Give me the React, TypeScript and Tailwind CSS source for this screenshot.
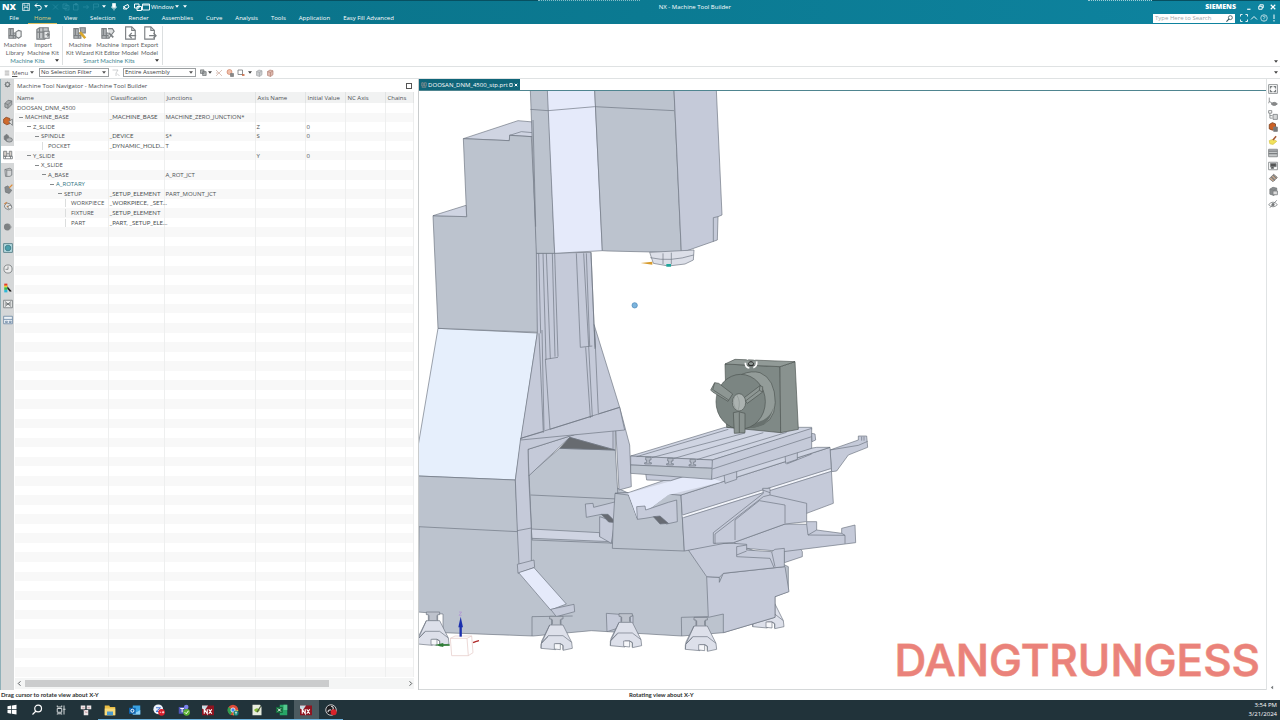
import type { ReactNode } from 'react';

type IconProps = { className?: string; children: ReactNode };

const Icon = ({ className = 'size-3', children }: IconProps) => (
  <svg viewBox="0 0 16 16" className={className} fill="none" stroke="currentColor" strokeWidth="1.3" aria-hidden="true">
    {children}
  </svg>
);

const Caret = ({ className = '' }: { className?: string }) => (
  <svg viewBox="0 0 8 5" className={`h-[3px] w-1 shrink-0 ${className}`} fill="currentColor" aria-hidden="true">
    <path d="M0 0h8L4 5z" />
  </svg>
);

/* ---------- Shared drawings ---------- */

const Gear = () => (
  <>
    <circle cx="8" cy="8" r="4.5" strokeWidth="2.6" />
    <path d="M8 1v3M8 12v3M1 8h3M12 8h3M3 3l2 2M11 11l2 2M13 3l-2 2M5 11l-2 2" strokeWidth="1.6" />
  </>
);

const Cube = ({ fill = '#c9ccce' }: { fill?: string }) => (
  <>
    <path d="M3 5l5-3 6 1.500v8L9 15l-6-2z" fill={fill} />
    <path d="M3 5l6 2 5-3.500M9 7v8" />
  </>
);

const Mill = () => (
  <>
    <path d="M1 14V3h5v5h3v6z" fill="#b9bcbf" />
    <path d="M1 11h8M3 3v8M6 8v6" />
  </>
);

/* ---------- Title bar and ribbon tabs ---------- */

const tabs = ['Home', 'View', 'Selection', 'Render', 'Assemblies', 'Curve', 'Analysis', 'Tools', 'Application', 'Easy Fill Advanced'];

const TitleBar = () => (
  <header className="bg-gradient-to-r from-[#0a7086] via-[#0b7a92] to-[#0e84a0] text-white">
    <div className="flex h-px">
      <div className="w-[42%] bg-[#075061]" />
      <div className="w-[8%] border-b border-dotted border-white/50" />
      <div className="flex-1" />
      <div className="w-[5%] border-b border-dotted border-white/60" />
      <div className="w-[10%] bg-[#075061]" />
    </div>
    <div className="grid h-[11px] grid-cols-[6fr_auto_5fr] items-center text-[6px] leading-[8px]">
      <div className="flex items-center pl-[2px]">
        <span className="w-5 font-['Open_Sans',sans-serif] text-[9px] font-extrabold leading-[10px]">NX</span>
        <button aria-label="Save">
          <Icon className="size-2"><path d="M1 1h14v14H1zM4 1v5h8V1M4 15V9h8v6" /></Icon>
        </button>
        <button aria-label="Undo" className="ml-1 flex items-center gap-[2px]">
          <Icon className="size-2"><path d="M6 1L2 5l4 4M2 5h8a4 4 0 010 9H8" strokeWidth="2" /></Icon>
          <Caret />
        </button>
        <div className="ml-1 flex gap-[2px] text-[#2f8ea4]">
          <Icon className="size-2"><path d="M2 3l10 10M12 3L2 13" /></Icon>
          <Icon className="size-2"><path d="M2 2h8v9H2zM6 5h8v9H6z" /></Icon>
          <Icon className="size-2"><path d="M3 3h9v11H3zM6 1h4v3H6z" /></Icon>
          <Icon className="size-2"><path d="M2 8h11M9 4l4 4-4 4" /></Icon>
          <Icon className="size-2"><path d="M3 14V2h10v6H3" /></Icon>
        </div>
        <Caret className="ml-[2px]" />
        <button aria-label="Voice command" className="ml-1">
          <Icon className="size-2"><path d="M5 1h6v8H5z" fill="currentColor" /><path d="M3 7c0 6 10 6 10 0M8 12v3" /></Icon>
        </button>
        <button aria-label="Touch mode" className="ml-1">
          <Icon className="size-2"><path d="M3 12l2-6 7-3 2 5-5 4zM2 7l8 5" strokeWidth="2" /></Icon>
        </button>
        <button aria-label="Switch window" className="ml-1">
          <Icon className="size-2"><path d="M1 2h9v8H1zM6 7h9v8H6z" strokeWidth="2" /></Icon>
        </button>
        <button className="flex items-center gap-px">
          <Icon className="size-2"><path d="M1 2h14v12H1zM1 4h14" strokeWidth="1.800" /></Icon>
          Window
          <Caret />
        </button>
        <Caret className="ml-1" />
      </div>
      <h1>NX - Machine Tool Builder</h1>
      <div className="flex items-center justify-end gap-[6px] pr-1">
        <span className="mr-1 font-['Open_Sans',sans-serif] text-[7px] font-extrabold">SIEMENS</span>
        <button aria-label="Minimize"><Icon className="size-[6px]"><path d="M3 14h9" strokeWidth="3" /></Icon></button>
        <button aria-label="Restore"><Icon className="size-[6px]"><path d="M2 6h9v8H2zM5 6V2h9v8h-3" strokeWidth="2.500" /></Icon></button>
        <button aria-label="Close"><Icon className="size-[6px]"><path d="M2 2l12 12M14 2L2 14" strokeWidth="3" /></Icon></button>
      </div>
    </div>
    <div className="flex h-3 items-center justify-between">
      <div className="flex h-full text-[6px] leading-[12px]">
        <button className="w-7">File</button>
        <nav className="flex gap-px">
          {tabs.map((tab) => (
            <button
              key={tab}
              className={`px-[6px] ${tab === 'Home' ? 'text-[#e0cd7c] shadow-[inset_0_-1px_0_#d9bd5f]' : ''}`}
            >
              {tab}
            </button>
          ))}
        </nav>
      </div>
      <div className="flex items-center gap-[2px] pr-[2px]">
        <label className="mr-[3px] flex h-[9px] w-[82px] items-center bg-white px-[2px] text-[#33525b]">
          <input aria-label="Search" placeholder="Type Here to Search" className="w-full min-w-0 text-[6px] leading-[8px] outline-none placeholder:text-[#a2a8ab]" />
          <Icon className="size-[7px] shrink-0"><circle cx="10" cy="6" r="4.500" strokeWidth="1.800" /><path d="M7 9l-6 6" strokeWidth="2.500" /></Icon>
        </label>
        <button aria-label="Full screen"><Icon className="size-2"><path d="M1 5V1h4M11 1h4v4M15 11v4h-4M5 15H1v-4" strokeWidth="1.800" /></Icon></button>
        <button aria-label="Collapse ribbon"><Icon className="size-2"><path d="M2 11l6-6 6 6" strokeWidth="1.800" /></Icon></button>
        <button aria-label="Help"><Icon className="size-2"><circle cx="8" cy="8" r="6.500" /><path d="M6 6c0-3 5-2 4 .5L8 8.500v1.500M8 11.500v1.500" /></Icon></button>
        <button aria-label="Alerts"><Icon className="size-2"><path d="M8 1v9M8 12v3" strokeWidth="2" /></Icon></button>
      </div>
    </div>
  </header>
);

/* ---------- Ribbon ---------- */

type Tool = { lines: [string, string]; width: string; art: ReactNode };

const kitTools: Tool[] = [
  { lines: ['Machine', 'Library'], width: 'w-[26px]', art: <><Mill /><path d="M9 7l3-2 3 1v6l-3 2-3-2z" fill="#eef0f1" /></> },
  { lines: ['Import', 'Machine Kit'], width: 'w-[30px]', art: <><path d="M1 4l3-2h10v9l-4 4H1z" fill="#c3c6c8" /><path d="M1 7h12M4 2v12M8 2v12" /><path d="M9 6h6v8H9z" fill="#e6e8e9" /><path d="M11 10h4M13 8l2 2-2 2" /></> },
];

const smartTools: Tool[] = [
  { lines: ['Machine', 'Kit Wizard'], width: 'w-[30px]', art: <><Mill /><path d="M8 2h6v6H9z" fill="#a8aaac" /><path d="M8 7l6 7" stroke="#d9a72b" strokeWidth="3" /></> },
  { lines: ['Machine', 'Kit Editor'], width: 'w-[25px]', art: <><Mill /><path d="M8 3h5l2 3-6 8" fill="#dddfe0" /><path d="M9 8l5 5" strokeWidth="2" /></> },
  { lines: ['Import', 'Model'], width: 'w-[20px]', art: <><path d="M3 1h7l4 4v10H3z" fill="#fff" /><path d="M10 1v4h4M15 11H8M10 8l-3 3 3 3" /></> },
  { lines: ['Export', 'Model'], width: 'w-[19px]', art: <><path d="M2 1h7l4 4v10H2z" fill="#fff" /><path d="M9 1v4h4M7 11h7M12 8l3 3-3 3" /></> },
];

const RibbonGroup = ({ title, tools, className }: { title: string; tools: Tool[]; className: string }) => (
  <section className={`flex flex-col border-r border-[#dcdfe0] ${className}`}>
    <div className="flex flex-1">
      {tools.map((tool) => (
        <button key={tool.lines.join(' ')} className={`flex flex-col items-center text-[#5e6264] ${tool.width}`}>
          <Icon className="mb-px size-[14px] text-[#7b7f82]">{tool.art}</Icon>
          <span className="whitespace-nowrap">{tool.lines[0]}</span>
          <span className="whitespace-nowrap">{tool.lines[1]}</span>
        </button>
      ))}
    </div>
    <div className="relative pr-[9px] text-center text-[#3b8590]">
      {title}
      <Caret className="absolute right-[3px] top-[2px] text-[#333]" />
    </div>
  </section>
);

const Ribbon = () => (
  <div className="flex h-[43px] justify-between border-b border-[#dfe2e3] bg-white pb-px pt-[2px] font-['Lato','Open_Sans',sans-serif] text-[6px] leading-[8px]">
    <div className="flex">
      <RibbonGroup title="Machine Kits" tools={kitTools} className="w-[63px] pl-[2px]" />
      <RibbonGroup title="Smart Machine Kits" tools={smartTools} className="w-[100px] pl-[2px]" />
    </div>
    <Caret className="mb-[2px] mr-[2px] self-end text-[#444]" />
  </div>
);

const selectClass = 'h-[9px] appearance-none border border-[#9b9fa1] bg-white pl-px text-[6px] leading-[7px] text-[#3d4142] outline-none';

const SelectionBar = () => (
  <div className="flex h-3 items-center border-b border-[#dfe2e3] bg-white pl-1 pr-[2px] text-[6px] leading-[8px] text-[#555]">
    <button className="flex w-[35px] items-center gap-[2px]">
      <Icon className="size-[6px]"><path d="M2 3h12M2 8h12M2 13h12" /></Icon>
      <span><u>M</u>enu</span>
      <Caret />
    </button>
    <span className="relative flex items-center">
      <select aria-label="Selection filter" className={`w-[70px] ${selectClass}`}><option>No Selection Filter</option></select>
      <Caret className="pointer-events-none absolute right-[3px]" />
    </span>
    <Icon className="mx-[3px] size-2 text-[#b5b8ba]"><path d="M1 2h11L8 8v6M10 9l5 5" /></Icon>
    <span className="relative flex items-center">
      <select aria-label="Selection scope" className={`w-[73px] ${selectClass}`}><option>Entire Assembly</option></select>
      <Caret className="pointer-events-none absolute right-[3px]" />
    </span>
    <div className="ml-1 flex items-center gap-[3px] text-[#737779]">
      <Icon className="size-[7px]"><path d="M1 2h8v8H1zM6 6h8v9H6z" fill="#b5b9b9" strokeWidth="1.800" /></Icon>
      <Caret className="-ml-[2px] text-[#444]" />
      <Icon className="size-2 text-[#c9a598]"><path d="M2 2l12 12M14 2L2 14M2 8h4" /></Icon>
      <Icon className="size-2"><circle cx="7" cy="6" r="5" fill="#f0bda8" stroke="#cb7f62" /><path d="M9 9h6v6H9z" fill="#888" /></Icon>
      <Icon className="size-2"><path d="M2 2h9v9H2z" strokeWidth="1.600" /><path d="M10 12h5" stroke="#c55a30" strokeWidth="3" /></Icon>
      <Caret className="text-[#444]" />
      <Icon className="size-2 text-[#a3a6a8]"><Cube /></Icon>
      <Icon className="size-2 text-[#b08074]"><Cube fill="#dfbab0" /></Icon>
    </div>
    <Caret className="ml-auto text-[#444]" />
  </div>
);

/* ---------- Resource bar on the left ---------- */

const railTop: { label: string; art: ReactNode }[] = [
  { label: 'Assembly Navigator', art: <><path d="M3 7l5-5 6 1v6l-6 6-5-2z" fill="#a9adaf" /><path d="M3 7l5 2 6-6M8 9v6" /></> },
  { label: 'Constraint Navigator', art: <><path d="M1 5l4-3 6 2v8l-5 2-5-3z" fill="#cf6a2c" stroke="#8a4a26" /><path d="M9 9l6-4v10z" fill="#ddd" /></> },
  { label: 'Part Navigator', art: <><path d="M2 5l4-3 3 3v6l-3 2-4-3z" fill="#777b7d" /><ellipse cx="10" cy="11" rx="5" ry="3.500" fill="#b3b6b8" /></> },
  { label: 'Machine Tool Navigator', art: <><path d="M1 2h5v8H1zM10 2h4v8h-4z" fill="#d5cfc8" /><path d="M1 10h14v4H1zM6 6h4M4 10v4M12 10v4" /></> },
  { label: 'Reuse Library', art: <><path d="M3 4l8-2 3 2v9l-3 2H4z" fill="#d4d6d7" /><path d="M3 4l3 1h8M6 5v10" /></> },
  { label: 'HD3D Tools', art: <><path d="M3 5l5-2 2 4 4 3-4 5-6-2z" fill="#85898b" /><path d="M10 6l5-5" stroke="#dd8d3b" strokeWidth="2" /></> },
  { label: 'Web Browser', art: <><path d="M2 8l4-5 6 2 2 5-5 4-5-2z" fill="#dedfdf" /><path d="M2 5l4-3M6 8l6 4" stroke="#cf8442" strokeWidth="1.800" /><circle cx="11" cy="10" r="3" fill="#eee" /></> },
];

const railMiddle: { label: string; art: ReactNode }[] = [
  { label: 'Materials', art: <><circle cx="7" cy="8" r="5.500" fill="#7d8183" stroke="none" /><path d="M10 4l4 4-4 5" stroke="#b0b3b5" /></> },
  { label: 'Internet', art: <><path d="M1 1h14v14H1z" fill="#b9dde3" stroke="#49747d" /><circle cx="8" cy="8" r="4.500" fill="#4a9fac" stroke="#3b7984" /></> },
  { label: 'History', art: <><circle cx="8" cy="8" r="6.500" fill="#ececec" /><path d="M8 4v4.500H4" /></> },
];

const railBottom: { label: string; art: ReactNode }[] = [
  {
    label: 'Visualization',
    art: (
      <g stroke="none">
        <path d="M2 1h5v4H2z" fill="#e23a2b" /><path d="M2 4h5v3H2z" fill="#f4d12c" /><path d="M2 7h5v4H2z" fill="#36c04a" />
        <path d="M2 11h5v4H2z" fill="#2fb8d8" /><path d="M7 5l7 8-3 1-4-5z" fill="#222" />
      </g>
    ),
  },
  { label: 'Process Studio', art: <><path d="M1 2h14v12H1z" fill="#eceded" /><path d="M3 4l10 8M13 4L3 12M3 8h10" strokeWidth="1.600" /></> },
  { label: 'Layers', art: <><path d="M1 2h14v12H1z" fill="#eef3f8" stroke="#6b86a3" /><path d="M1 7h14M4 10h3v2H4zM10 10h3v2h-3z" stroke="#6b86a3" /></> },
];

const ResourceBar = () => (
  <aside className="flex w-[14px] shrink-0 flex-col items-center border-l border-[#8fb0b8] bg-[#d5d7d8] text-[#74797b]">
    <button aria-label="Settings" className="flex h-4 items-start pt-[2px]"><Icon className="size-[7px]"><Gear /></Icon></button>
    {railTop.map((item) => (
      <button
        key={item.label}
        aria-label={item.label}
        className={`flex h-[17px] w-full items-center justify-center ${item.label === 'Machine Tool Navigator' ? 'bg-white' : ''}`}
      >
        <Icon className="size-[10px]">{item.art}</Icon>
      </button>
    ))}
    <div className="mb-px mt-[2px] flex w-full flex-col">
      {railMiddle.map((item) => (
        <button key={item.label} aria-label={item.label} className="flex h-[21px] items-center justify-center">
          <Icon className="size-[10px]">{item.art}</Icon>
        </button>
      ))}
    </div>
    {railBottom.map((item) => (
      <button key={item.label} aria-label={item.label} className="flex h-4 items-center justify-center">
        <Icon className="size-[10px]">{item.art}</Icon>
      </button>
    ))}
  </aside>
);

/* ---------- Machine Tool Navigator ---------- */

type Row = {
  name: string;
  depth: number;
  leaf?: boolean;
  active?: boolean;
  classification?: string;
  junctions?: string;
  axis?: string;
  value?: string;
};

const rows: Row[] = [
  { name: 'DOOSAN_DNM_4500', depth: 0, leaf: true },
  { name: 'MACHINE_BASE', depth: 1, classification: '_MACHINE_BASE', junctions: 'MACHINE_ZERO_JUNCTION*' },
  { name: 'Z_SLIDE', depth: 2, axis: 'Z', value: '0' },
  { name: 'SPINDLE', depth: 3, classification: '_DEVICE', junctions: 'S*', axis: 'S', value: '0' },
  { name: 'POCKET', depth: 4, leaf: true, classification: '_DYNAMIC_HOLD...', junctions: 'T' },
  { name: 'Y_SLIDE', depth: 2, axis: 'Y', value: '0' },
  { name: 'X_SLIDE', depth: 3 },
  { name: 'A_BASE', depth: 4, junctions: 'A_ROT_JCT' },
  { name: 'A_ROTARY', depth: 5, active: true },
  { name: 'SETUP', depth: 6, classification: '_SETUP_ELEMENT', junctions: 'PART_MOUNT_JCT' },
  { name: 'WORKPIECE', depth: 7, leaf: true, classification: '_WORKPIECE, _SET...' },
  { name: 'FIXTURE', depth: 7, leaf: true, classification: '_SETUP_ELEMENT' },
  { name: 'PART', depth: 7, leaf: true, classification: '_PART, _SETUP_ELE...' },
];

const emptyRows = Array.from({ length: 47 }, (_, i) => i);
const indents = ['pl-px', 'pl-[2px]', 'pl-[10px]', 'pl-[18px]', 'pl-[25px]', 'pl-[33px]', 'pl-[41px]', 'pl-[48px]'];
const columns = ['Name', 'Classification', 'Junctions', 'Axis Name', 'Initial Value', 'NC Axis', 'Chains'];
const cell = 'whitespace-nowrap border-r border-[#eeefef] p-0 pl-px';

const Navigator = () => (
  <section className="flex w-[405px] shrink-0 flex-col border-r border-[#c9cccd] bg-white pl-px pr-1 text-[6px] leading-[8px] text-[#4c5052]">
    <div className="flex h-[13px] items-center justify-between pl-[2px] pr-[2px]">
      <h2 className="text-[#4a4e50]">Machine Tool Navigator - Machine Tool Builder</h2>
      <button aria-label="Maximize panel" className="size-[6px] border border-[#555]" />
    </div>
    <div className="min-h-0 flex-1">
      <table className="h-full w-full table-fixed border-collapse text-left">
        <colgroup>
          <col className="w-[93px]" />
          <col className="w-[56px]" />
          <col className="w-[91px]" />
          <col className="w-[50px]" />
          <col className="w-[40px]" />
          <col className="w-[40px]" />
          <col />
        </colgroup>
        <thead className="bg-[#f1f2f2]">
          <tr className="h-[11px]">
            {columns.map((column) => (
              <th key={column} className="whitespace-nowrap border-r border-[#e2e4e4] p-0 pl-[2px] font-normal">{column}</th>
            ))}
          </tr>
        </thead>
        <tbody>
          {rows.map((row) => (
            <tr key={row.name} className="h-2 even:bg-[#f8f8f8]">
              <td className={`${cell} ${row.active ? 'text-[#2f7684]' : ''}`}>
                <span className={`flex items-center ${indents[row.depth]}`}>
                  {row.depth > 0 && (
                    <span className="ml-px flex w-[6px] shrink-0">
                      {row.leaf ? <span className="h-2 w-1 border-l border-[#dcdede]" /> : <span className="h-px w-1 bg-[#85898b]" />}
                    </span>
                  )}
                  {row.name}
                </span>
              </td>
              <td className={`${cell} font-['Lato','Open_Sans',sans-serif]`}>{row.classification}</td>
              <td className={cell}>{row.junctions}</td>
              <td className={cell}>{row.axis}</td>
              <td className={cell}>{row.value}</td>
              <td className={cell} />
              <td className={cell} />
            </tr>
          ))}
          {emptyRows.map((i) => (
            <tr key={i} className="h-2 odd:bg-white even:bg-[#f8f8f8]">
              {columns.map((column) => <td key={column} className={cell} />)}
            </tr>
          ))}
        </tbody>
      </table>
    </div>
    <div className="my-px flex h-[11px] items-center gap-[3px] bg-[#f4f5f5] pl-[2px] pr-px">
      <Icon className="size-[5px]"><path d="M11 1L4 8l7 7" strokeWidth="3" /></Icon>
      <div className="h-[7px] flex-1"><div className="h-full w-4/5 bg-[#cbcccd]" /></div>
      <Icon className="size-[5px]"><path d="M5 1l7 7-7 7" strokeWidth="3" /></Icon>
    </div>
  </section>
);

/* ---------- 3D model, drawn at three units per screen pixel ---------- */

const front = '#bcc3ce';
const side = '#c5cad9';
const top = '#cfd4e2';
const light = '#e5eafa';

const Poly = ({ p, f }: { p: string; f: string }) => <polygon points={p} fill={f} />;

const Foot = ({ x, y }: { x: number; y: number }) => (
  <g transform={`translate(${x} ${y})`}>
    <path d="M-20-98h40v8h-6v20h-28v-20h-6z" fill="#bdc2cc" />
    <path d="M-20-72h40l26 52 2 18-28 6v-16l-8-4h-14v18l-44-4 2-22z" fill="#dde0ea" />
    <path d="M-20-72l-24 54 20-22h44l26 20M-46-2v-14l22-22M20 2v-12l-8-6M-12-88v14M12-88v14" fill="none" />
    <path d="M-6 0v-16h18v18z" fill="#f6f7fa" />
  </g>
);

const Column = () => (
  <g>
    <Poly p="136,146 300,92 345,96 345,140 275,136 274,152" f={top} />
    <Poly p="275,136 310,125 345,128 345,140" f={top} />
    <Poly p="136,146 274,152 275,136 340,140 357,490 360,727 60,715 45,377 146,380" f={front} />
    <Poly p="45,377 144,346 146,380" f={top} />
    <Poly p="355,490 519,487 528,703 605,952 620,1020 308,1050 358,729" f={side} />
    <path d="M362 490l6 240M375 490l9 320M385 490l12 316M403 490l8 310M410 490l10 310M382 808l38-6M475 490l12 282M497 490l15 278M505 490l10 278M519 487l12 290M487 772l36-4M363 730l13 298M372 720l6 300M382 808l14 210M512 768l11 212M503 772l14 212M530 720l11 250M396 1018l127-40M541 972l64-20M528 703l4 70M308 1045l68-20" fill="none" />
    <Poly p="337,0 390,0 410,490 355,490" f={front} />
    <Poly p="388,0 530,0 553,482 410,490" f={light} />
    <Poly p="530,0 768,0 790,488 570,483 553,482" f={front} />
    <Poly p="768,0 895,0 912,375 900,380 898,450 790,488" f={side} />
    <path d="M337 58l53 4 140-12 238 12M886 455v-72l14-3M345 90l8 320" fill="none" />
    <path d="M695 487l133-7-2 30-25 12-50 6-45-8z" fill="#dcdfe8" />
    <path d="M697 503q60 14 130-8M760 488v35M735 490v32" fill="none" />
    <path d="M668 519l35-4v9z" fill="#d79b2c" stroke="none" />
    <rect x="745" y="522" width="14" height="8" fill="#1fa79c" stroke="none" />
  </g>
);

const Base = () => (
  <g>
    <Poly p="5,1158 292,1170 335,1155 600,1195 1111,1430 1111,1505 1071,1520 1071,1582 916,1628 791,1638 690,1632 520,1622 345,1638 75,1628 75,1572 0,1566" f={front} />
    <g transform="translate(0 720)">
      <Poly p="60,-5 358,9 310,325 292,450 0,438 0,350" f="#e6effc" />
      <Poly p="0,438 292,450 300,605 0,590" f={front} />
      <path d="M342 918v-58l122-2" fill="none" />
      <Poly p="333,435 425,355 592,360 600,500 600,640 342,630" f={front} />
      <Poly p="330,358 592,275 592,360 455,322 333,437" f={side} />
      <Poly p="425,355 455,322 590,360" f="#676b70" />
      <path d="M338 495l262 12" fill="none" />
      <Poly p="340,597 545,608 545,620 580,622 580,635 342,625" f={top} />
      <Poly p="308,325 605,232 635,345 640,470 603,480 592,275 330,358 332,435 340,597 340,700 303,703 298,600 292,450" f={side} />
      <path d="M585 278v80M298 602l42-8" fill="none" />
      <Poly p="298,703 348,690 350,712 300,730" f={side} />
      <Poly p="302,728 348,713 445,822 398,840" f={light} />
      <Poly p="398,838 468,823 470,845 415,860" f={side} />
      <Poly p="545,560 590,575 580,640 545,620" f={side} />
      <Poly p="502,522 525,520 527,532 622,508 626,568 590,578 550,553 505,562" f={side} />
      <Poly p="550,553 570,553 595,578 572,576" f="#676b73" />
      <Poly p="565,850 645,856 645,880 567,905" f={side} />
    </g>
  </g>
);

const Table = () => (
  <g transform="translate(546 750)">
    <Poly p="550,550 607,635 607,650 553,668" f={side} />
    <Poly p="400,608 555,552 620,553 620,545 650,545 650,570 725,580 725,565 765,555 767,608 550,635 440,625" f={side} />
    <path d="M620 553l4 32 26-15M725 580l10 6v25M624 585l111 1" fill="none" />
    <Poly p="320,710 358,712 358,727 370,700 555,680 567,755 525,770 525,832 370,878 370,822 325,832" f={side} />
    <Poly p="265,630 345,610 400,610 440,613 440,630 515,635 525,628 553,625 553,680 370,700 358,712 320,710" f={side} />
    <path d="M410 620v30l100 5 12 28M410 620l30-5M410 645l30-12M515 635l10 45" fill="none" />
    <Poly p="690,330 775,300 775,288 800,288 803,322 745,345 710,393 695,395" f={side} />
    <path d="M690 330l85-14 28-12M785 290v12M792 290v12" fill="none" />
    <Poly p="45,460 85,458 112,535 205,462 243,465 253,633 37,625 40,540" f={front} />
    <Poly p="243,465 690,322 700,490 620,520 555,550 400,605 253,633" f={side} />
    <Poly p="45,460 85,458 210,415 360,370 650,322 690,322 243,465 205,463 112,535 85,465" f={top} />
    <path d="M85 460l210-60 70 25-160 40-93 70z" fill={light} stroke="none" />
    <path d="M248 529l444-139" stroke="#f3f5fb" strokeWidth="7" />
    <path d="M248 525l444-139M250 533l444-139" fill="none" />
    <Poly p="340,610 340,578 490,460 488,445 510,445 510,465 620,490 620,545 555,552 400,608" f={side} />
    <path d="M345 612v-30l145-112 20-5M405 600v-60l73-58 77 13v55M488 450l22 8" fill="none" />
    <Poly p="137,400 210,398 248,395 248,410 212,422 140,420" f={side} />
    <Poly p="372,402 410,390 410,418 375,430" f={side} />
    <Poly p="555,345 592,335 592,358 557,370" f={side} />
    <Poly p="92,348 375,262 635,262 635,268 337,360" f={top} />
    <Poly p="92,348 337,360 340,385 92,375" f={side} />
    <Poly p="92,375 340,385 335,418 92,400" f={front} />
    <Poly p="337,360 635,265 635,325 335,418" f={side} />
    <path d="M337 387l298-97M110 350l275-82M155 353l280-74M220 356l270-78M290 359l270-82M560 372l75-30" fill="none" />
    <path d="M137 352h16v8h-5v8h6v4h-20v-4h6v-8h-3zM203 355h16v8h-5v8h6v4h-20v-4h6v-8h-3zM270 358h16v8h-5v8h6v4h-20v-4h6v-8h-3z" fill="#b4bac6" />
    <Poly p="635,280 645,282 647,300 636,305" f={side} />
    <Poly p="110,500 135,498 137,510 205,487 230,480 232,545 200,552 165,530 135,535 112,538" f={side} />
    <Poly p="160,530 180,528 205,550 180,552" f="#676b73" />
    <g stroke="#4d5452">
      <Poly p="375,72 540,80 542,278 380,262" f="#7f8986" />
      <Poly p="540,80 585,65 595,268 542,278" f="#89928f" />
      <Poly p="375,72 405,58 585,65 540,80" f="#919a97" />
      <path d="M425 103q30-12 55-5 45 18 46 90-3 65-60 72l-45 6z" fill="#939c99" />
      <path d="M490 240q36-20 35-75-3 90-62 98l-40 3z" fill="#68716e" stroke="none" />
      <ellipse cx="422" cy="185" rx="74" ry="82" fill="#7b8582" />
      <path d="M430 175l50-38 8 3v16l-46 34z" fill="#8d9693" />
      <path d="M480 137l-2 14-44 34M478 151l10 5" fill="none" />
      <path d="M332 150l12-22 12 2 42 32-14 22-46-28z" fill="#8d9693" />
      <path d="M344 128l-6 22M340 150l46 30" fill="none" />
      <path d="M400 218l15-3 20 5v58l-32 2z" fill="#8a9390" />
      <path d="M418 217v62" />
      <ellipse cx="417" cy="187" rx="20" ry="26" fill="#abb2b0" />
      <path d="M404 170q-10 22 8 42M410 165q14 20 4 46" fill="none" stroke="#8d9693" />
    </g>
    <g fill="none" stroke="#fff" strokeWidth="5">
      <path d="M440 58q12-10 26 0M436 68q0 14 12 16M470 64q2 14-10 19" />
    </g>
    <path d="M445 70q8-10 16 0l-3 7h-10z" fill="none" stroke="#222" strokeWidth="3" />
  </g>
);

const Triad = () => (
  <g transform="translate(0 720)" strokeWidth="2">
    <path d="M97 925l14-7h50l4 50-14 9h-50zM97 925h50l4 52M147 925l14-7" fill="#fff" fillOpacity="0.800" stroke="#e2c6c2" />
    <path d="M128 920v-32" stroke="#1a2fae" strokeWidth="7" />
    <path d="M121 892l7-32 7 32z" fill="#1a2fae" stroke="none" />
    <path d="M95 945H72" stroke="#2d7c35" strokeWidth="5" />
    <path d="M76 939l-26 6 26 6z" fill="#2d7c35" stroke="none" />
    <path d="M165 938l10-4 8-2" stroke="#b32b2b" strokeWidth="4" />
    <path d="M123 846h8l-8 10h8" fill="none" stroke="#b08fd4" />
  </g>
);

const MachineModel = () => (
  <svg viewBox="3 3 2541 1794" preserveAspectRatio="xMinYMin meet" className="h-full w-full" stroke="#6d7480" strokeWidth="2" strokeLinejoin="round" role="img" aria-label="Milling machine model">
    <Foot x={1050} y={1612} />
    <Base />
    <Column />
    <path d="M308 1045L605 952" />
    <Table />
    <Foot x={45} y={1664} />
    <Foot x={415} y={1677} />
    <Foot x={623} y={1669} />
    <Foot x={848} y={1680} />
    <path d="M791 1638l-1-56 80-2" fill="none" />
    <circle cx="650" cy="646" r="8" fill="#7db4dc" stroke="#4284b8" />
    <Triad />
  </svg>
);

/* ---------- Graphics window ---------- */

const viewTools: { label: string; art: ReactNode }[] = [
  { label: 'Fit', art: <><path d="M1 1h14v14H1z" /><path d="M4 7V4h3M9 4h3v3M12 9v3H9M7 12H4V9" strokeWidth="2" /></> },
  { label: 'Orient view', art: <><path d="M2 1v6l5 3M2 7l-1 3" /><path d="M5 11q5-5 10 0-5 5-10 0z" fill="#888" /></> },
  { label: 'Tree view', art: <><path d="M1 1h5v4H1zM3 5v8h4M3 9h4" /><path d="M8 7h7v8H8z" fill="#d5d7d8" /></> },
  { label: 'Rendering style', art: <><path d="M2 4l5-3 5 2v7l-5 3-5-2z" fill="#cc6024" stroke="#7c401d" /><path d="M9 8h6v7H9z" fill="#777" /></> },
  { label: 'Highlight', art: <><path d="M2 9l6-2 6 3-6 5-5-1z" fill="#f2e25b" stroke="#d9c94f" /><path d="M8 8l5-6" stroke="#a75b35" strokeWidth="2.500" /></> },
  { label: 'Background', art: <><path d="M1 2h14v12H1z" fill="#c4c7c8" /><path d="M1 5h14M1 9h14" strokeWidth="2" /></> },
  { label: 'Window layout', art: <><path d="M1 2h14v12H1z" /><path d="M4 4h9v5H4zM5 9h4v3H5z" fill="#555" /></> },
  { label: 'Measure', art: <><path d="M2 9l7-7 6 5-7 7z" fill="#c8a88d" /><path d="M5 6l6 6M8 3l6 6" strokeWidth="1.800" /></> },
  { label: 'Section view', art: <><Cube fill="#8b8f91" /><path d="M8 8h7v6H8z" fill="#ddd" /></> },
  { label: 'Show and hide', art: <><path d="M1 9q7-8 14 0-7 7-14 0zM14 2L3 14" /><circle cx="8" cy="9" r="2" fill="#777" /></> },
];

const GraphicsWindow = () => (
  <main className="relative flex min-w-0 flex-1 flex-col bg-white">
    <div className="flex h-3 border-b border-[#4f8590]">
      <div className="flex w-[101px] items-center justify-between bg-[#0f6579] px-[2px] text-[6px] leading-[8px] text-white">
        <Icon className="size-[6px] shrink-0 text-[#d6a79d]"><path d="M2 2h4v9H2zM9 2h5v9H9zM2 14h12" /></Icon>
        <span>DOOSAN_DNM_4500_stp.prt</span>
        <Icon className="size-[4px] shrink-0"><path d="M3 2h10v12H3z" strokeWidth="3" /></Icon>
        <button aria-label="Close tab"><Icon className="size-[4px]"><path d="M3 3l10 10M13 3L3 13" strokeWidth="4" /></Icon></button>
      </div>
    </div>
    <div className="min-h-0 flex-1 overflow-hidden border-b border-[#d5d8d9]">
      <MachineModel />
    </div>
    <p className="absolute bottom-2 right-[6px] font-['Inter',sans-serif] text-[44px] font-medium leading-[44px] text-[#ea827b] [-webkit-text-stroke:1px_#f2ab90] [paint-order:stroke]">
      DANGTRUNGESS
    </p>
  </main>
);

const ViewToolbar = () => (
  <aside className="flex w-[14px] shrink-0 flex-col items-start justify-between border-l border-[#e0e3e4] pb-px pl-px pt-1 text-[#7b7f81]">
    <div className="flex h-[127px] flex-col justify-between">
      {viewTools.map((tool) => (
        <button key={tool.label} aria-label={tool.label} className="flex flex-1 items-center">
          <Icon className="size-[10px]">{tool.art}</Icon>
        </button>
      ))}
    </div>
    <Caret className="ml-[2px] rotate-90" />
  </aside>
);

/* ---------- Windows taskbar ---------- */

const NxTile = () => (
  <>
    <path d="M0 2h16v13H0z" fill="#8f1420" />
    <path d="M0 2h8l-4 6-4-2z" fill="#c6dbe2" />
    <path d="M3 13V7l4 6V7M9 7l4 6M13 7l-4 6" stroke="#fff" strokeWidth="1.500" />
  </>
);

const apps: { label: string; open?: boolean; active?: boolean; art: ReactNode }[] = [
  { label: 'Start', art: <path d="M2 3l5-1v5H2zM8 2l6-1v6H8zM2 8h5v5l-5-1zM8 8h6v6l-6-1z" fill="#fff" /> },
  { label: 'Search', art: <path d="M2 14l4-4M5 6a4.500 4.500 0 119 0 4.500 4.500 0 01-9 0z" stroke="#fff" strokeWidth="1.600" /> },
  { label: 'Task view', art: <path d="M3 6h6v5H3zM3 2v2h6V2M3 14v-1h6v1M12 2v12M11 7h3" stroke="#d7dcde" strokeWidth="1.300" /> },
  { label: 'License manager', art: <><path d="M1 2h6v5H1zM9 2h6v5H9zM5 8h6v7H5z" fill="#ece5e6" /><path d="M3 5h3M10 5h3M7 11h3M4 7l3 3" stroke="#b07c84" /></> },
  { label: 'File Explorer', open: true, art: <><path d="M1 2h6l1 2h7v11H1z" fill="#e9bd45" /><path d="M1 6h14v9H1z" fill="#f7dc7d" /><path d="M4 10h8v5H4z" fill="#4c9bd0" /></> },
  { label: 'Outlook', open: true, art: <><path d="M5 2h10v12H5z" fill="#3aa3e3" /><path d="M5 8l5 3 5-3v6H5z" fill="#8ed0f5" /><path d="M0 5h9v8H0z" fill="#0f62ad" /><circle cx="4.500" cy="9" r="2" stroke="#fff" strokeWidth="1.300" /></> },
  { label: 'Zalo', open: true, art: <><circle cx="7" cy="7" r="6.500" fill="#eef3fb" /><path d="M4 5h6l-6 5h6" stroke="#3f74d6" strokeWidth="1.300" /><circle cx="11.500" cy="11" r="4.500" fill="#d91f2c" /><path d="M9 11h2M12 11h3M13.500 9.500v3" stroke="#fff" /></> },
  { label: 'Teams', open: true, art: <><path d="M1 4h9v9H1z" fill="#4f56b8" /><circle cx="11" cy="4" r="3" fill="#7b83eb" /><path d="M3 6h5M5.500 6v5" stroke="#fff" strokeWidth="1.300" /><circle cx="11.500" cy="11" r="4.500" fill="#5cb135" /><path d="M9 11l2 2 3-4" stroke="#fff" strokeWidth="1.300" /></> },
  { label: 'NX', open: true, art: <NxTile /> },
  { label: 'Chrome', open: true, art: <><circle cx="8" cy="8" r="7" fill="#dd4b39" /><path d="M8 8L2 4a7 7 0 003 10.500z" fill="#2f9e50" /><path d="M8 8h7a7 7 0 01-7 7z" fill="#f4c534" /><circle cx="8" cy="8" r="2.800" fill="#4285f4" stroke="#fff" /><circle cx="12" cy="12" r="3.500" fill="#158078" /><path d="M10.500 11h3M12 11v3" stroke="#fff" /></> },
  { label: 'Notepad++', open: true, art: <><path d="M2 1h10l2 3v11H2z" fill="#e7ecdf" /><path d="M4 8q4-5 8 0-4 6-8 0z" fill="#82b93b" /><path d="M13 3l-5 8" stroke="#44513a" strokeWidth="1.500" /></> },
  { label: 'Excel', open: true, art: <><path d="M5 1h10v14H5z" fill="#27a567" /><path d="M10 1h5v7h-5z" fill="#55c98f" /><path d="M0 4h9v8H0z" fill="#136c3b" /><path d="M2.500 6l4 4M6.500 6l-4 4" stroke="#fff" strokeWidth="1.300" /></> },
  { label: 'NX Machine Tool Builder', open: true, active: true, art: <NxTile /> },
  { label: 'OBS Studio', open: true, art: <><circle cx="8" cy="8" r="7" fill="#1d1c1f" stroke="#c9cacc" strokeWidth="1.300" /><path d="M8 3a3 3 0 010 6M4 11a3 3 0 014-3" stroke="#d2d3d5" strokeWidth="1.500" /><circle cx="11.500" cy="11" r="4" fill="#d8232b" /></> },
];

const Taskbar = () => (
  <footer className="flex h-5 items-stretch justify-between bg-[#21333a] text-white">
    <div className="flex w-[343px]">
      {apps.map((app) => (
        <button
          key={app.label}
          aria-label={app.label}
          className={`flex flex-1 items-center justify-center border-b px-px ${app.open ? 'border-[#6db3de]' : 'border-transparent'} ${app.active ? 'bg-[#4b5a60]' : ''}`}
        >
          <svg viewBox="0 0 16 16" className="size-3" fill="none" aria-hidden="true">{app.art}</svg>
        </button>
      ))}
    </div>
    <div className="flex flex-col justify-center pr-[3px] text-right text-[6px] leading-[9px]">
      <span>3:54 PM</span>
      <span>3/21/2024</span>
    </div>
  </footer>
);

export default function App() {
  return (
    <div className="flex h-screen flex-col overflow-hidden bg-white font-['Open_Sans','Noto_Sans',sans-serif]">
      <TitleBar />
      <Ribbon />
      <SelectionBar />
      <div className="flex min-h-0 flex-1">
        <ResourceBar />
        <Navigator />
        <GraphicsWindow />
        <ViewToolbar />
      </div>
      <div className="grid h-[10px] grid-cols-[629px_1fr] items-center font-['Lato',sans-serif] text-[6px] font-bold leading-[8px] text-[#2d2f30]">
        <span className="pl-px">Drag cursor to rotate view about X-Y</span>
        <span>Rotating view about X-Y</span>
      </div>
      <Taskbar />
    </div>
  );
}
